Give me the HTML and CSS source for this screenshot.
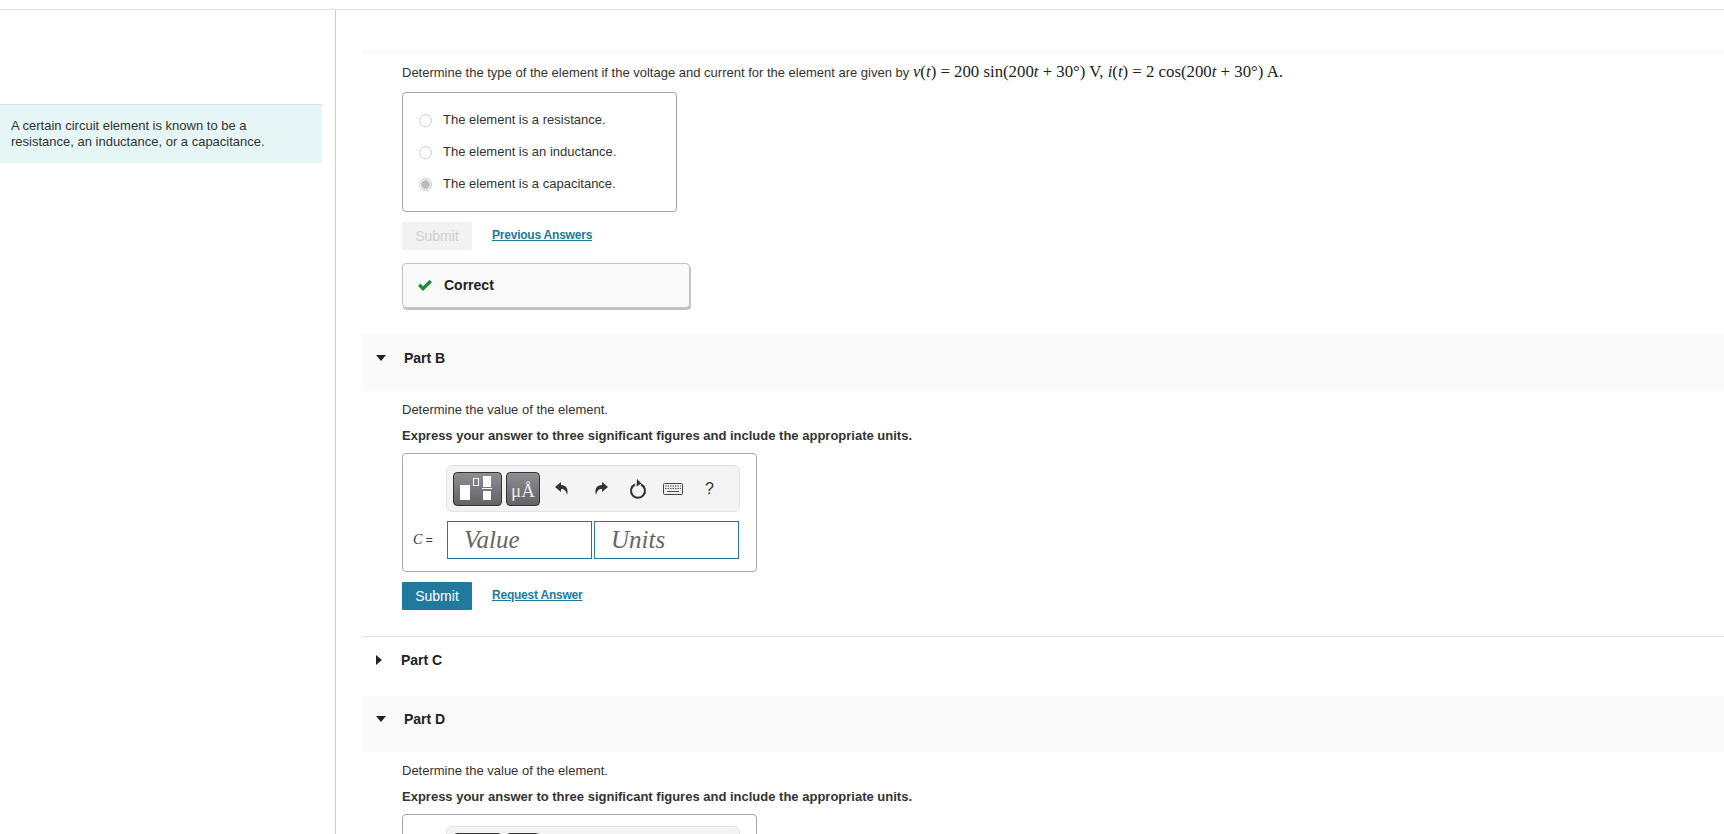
FILE: index.html
```html
<!DOCTYPE html>
<html lang="en">
<head>
<meta charset="utf-8">
<title>Circuit element</title>
<link rel="stylesheet" href="styles.css">
</head>
<body>
<div class="app">
  <aside class="side">
    <p class="info">A certain circuit element is known to be a<br>resistance, an inductance, or a capacitance.</p>
  </aside>
  <main class="main">
    <div class="strip"></div>
    <div class="content">
      <p class="question">Determine the type of the element if the voltage and current for the element are given by <span class="math"><i>v</i>(<i>t</i>) = 200 sin(200<i>t</i> + 30°) V, <i>i</i>(<i>t</i>) = 2 cos(200<i>t</i> + 30°) A.</span></p>
      <div class="choices">
        <label class="choice"><span class="radio"></span>The element is a resistance.</label>
        <label class="choice"><span class="radio"></span>The element is an inductance.</label>
        <label class="choice"><span class="radio radio-on"></span>The element is a capacitance.</label>
      </div>
      <div class="actions">
        <button class="btn btn-off">Submit</button>
        <a class="link">Previous Answers</a>
      </div>
      <div class="correct">
        <svg class="check" width="16" height="13" viewBox="0 0 16 13"><path d="M1 7l2.5-2.4L6 7.2 12.600 0.800 15 3.200 6 12z" fill="#1f8a3c"/></svg>
        <span class="correct-text">Correct</span>
      </div>
    </div>

    <section class="part part-b">
      <header class="part-bar">
        <svg class="caret" width="10" height="6" viewBox="0 0 10 6"><path d="M0 0h10L5 6z" fill="#222"/></svg>
        <h2 class="part-title">Part B</h2>
      </header>
      <div class="content">
        <p class="para">Determine the value of the element.</p>
        <p class="para para-strong">Express your answer to three significant figures and include the appropriate units.</p>
        <div class="answer">
          <div class="toolbar">
            <div class="tool tool-wide">
              <svg width="49" height="34" viewBox="0 0 49 34"><rect x="7" y="13" width="10" height="15" fill="#fff"/><rect x="20.500" y="6.500" width="5" height="7" fill="none" stroke="#fff"/><rect x="30" y="4" width="8" height="11" fill="#fff"/><rect x="29" y="16" width="10" height="1" fill="#fff"/><rect x="30" y="19" width="8" height="9" fill="#fff"/></svg>
            </div>
            <div class="tool tool-unit">μÅ</div>
            <div class="icons">
              <svg class="ico" width="16" height="16" viewBox="0 0 16 16"><path d="M7 1L1 6l6 5V8c3 0 5 1 6 6 2-6-1-10-6-10z" fill="#333"/></svg>
              <svg class="ico" width="16" height="16" viewBox="0 0 16 16"><path d="M9 1l6 5-6 5V8c-3 0-5 1-6 6-2-6 1-10 6-10z" fill="#333"/></svg>
              <svg class="ico" width="18" height="20" viewBox="0 0 18 20"><path d="M6 5.500a7 7 0 1 0 6 0" fill="none" stroke="#333" stroke-width="2"/><path d="M8 0l4.500 4.500L7.500 7.500z" fill="#333"/></svg>
              <svg class="ico" width="20" height="12" viewBox="0 0 20 12"><rect x="0.500" y="0.500" width="19" height="11" rx="1" fill="#eee" stroke="#444"/><path d="M2 3h16M2 5.500h16" stroke="#555" stroke-dasharray="1.500 1"/><path d="M4 8.500h12" stroke="#555"/></svg>
              <span class="help">?</span>
            </div>
          </div>
          <div class="inputs">
            <span class="var"><i>C</i> =</span>
            <div class="field">Value</div>
            <div class="field">Units</div>
          </div>
        </div>
        <div class="actions">
          <button class="btn">Submit</button>
          <a class="link">Request Answer</a>
        </div>
      </div>
    </section>

    <section class="part part-c">
      <svg class="caret-side" width="6" height="10" viewBox="0 0 6 10"><path d="M0 0l6 5-6 5z" fill="#222"/></svg>
      <h2 class="part-title">Part C</h2>
    </section>

    <section class="part">
      <header class="part-bar">
        <svg class="caret" width="10" height="6" viewBox="0 0 10 6"><path d="M0 0h10L5 6z" fill="#222"/></svg>
        <h2 class="part-title">Part D</h2>
      </header>
      <div class="content">
        <p class="para">Determine the value of the element.</p>
        <p class="para para-strong">Express your answer to three significant figures and include the appropriate units.</p>
        <div class="answer">
          <div class="toolbar">
            <div class="tool tool-wide"></div>
            <div class="tool tool-unit"></div>
          </div>
        </div>
      </div>
    </section>
  </main>
</div>
</body>
</html>
```
FILE: styles.css
```css
* { box-sizing: border-box; }
html, body { margin: 0; height: 100%; overflow: hidden; background: #fff; }
body { font-family: "Liberation Sans", Arial, sans-serif; font-size: 13px; line-height: 16px; color: #333; padding-top: 9px; }
p { margin: 0; }

.app { display: flex; height: calc(100vh - 9px); border-top: 1px solid #e2e4e8; overflow: hidden; }
.side { flex: 0 0 336px; padding-top: 94px; border-right: 1px solid #c3cfe2; }
.info { width: 322px; height: 59px; padding: 13px 0 0 11px; background: #e6f6f7; border-top: 1px solid #d7e2e4; color: #333; }

.main { flex: 1; min-width: 0; padding-left: 26px; }
.strip { height: 4px; margin-top: 40px; background: #f9f9f9; }
.content { padding-left: 40px; }

.question { margin-top: 10px; white-space: nowrap; }
.math { font-family: "Liberation Serif", "Times New Roman", serif; font-size: 16.800px; color: #222; }

.choices { width: 275px; height: 120px; margin-top: 11px; padding-top: 11px; border: 1px solid #a3a3a3; border-radius: 4px; }
.choice { display: flex; align-items: center; height: 32px; padding-left: 16px; }
.radio { width: 13px; height: 13px; margin-right: 11px; border: 1px solid #cfcfcf; border-radius: 50%; background: #fff; }
.radio-on { background: radial-gradient(circle, #bbb 0 4px, #f3f3f3 4.500px); }

.actions { display: flex; align-items: center; margin-top: 10px; height: 28px; }
.btn { width: 70px; height: 28px; padding: 0; border: 0; border-radius: 1px; background: #217a9e; color: #fff; font: 14px/28px "Liberation Sans", Arial, sans-serif; }
.btn-off { background: #f2f2f2; color: #d0d0d0; }
.link { margin: 0 0 2px 20px; color: #1b7a9f; font-weight: bold; font-size: 12px; letter-spacing: -0.220px; text-decoration: underline; }

.correct { display: flex; align-items: center; width: 288px; height: 45px; margin-top: 13px; padding-left: 14px; border: 1px solid #c4c4c4; border-radius: 4px; background: #f9f9f9; box-shadow: 1px 2px 0 #c2c2c2; font-weight: bold; font-size: 14px; color: #222; }
.check { margin-right: 11px; }
.correct-text { margin-bottom: 2px; }

.part-b { margin-top: 27px; }
.part-bar { display: flex; height: 56px; padding: 15px 0 0 14px; background: #f9f9f9; }
.caret { margin: 5px 18px 0 0; }
.part-title { margin: 0; font-size: 14px; line-height: 16px; font-weight: bold; color: #222; }

.para { margin-top: 10px; }
.part-bar + .content .para:first-child { margin-top: 11px; }
.para-strong { font-weight: bold; }

.answer { width: 355px; height: 119px; margin-top: 9px; padding-top: 11px; border: 1px solid #a8a8a8; border-radius: 4px; }
.toolbar { display: flex; align-items: center; width: 294px; height: 47px; margin-left: 43px; padding-left: 6px; border: 1px solid #e3e3e3; border-radius: 6px; background: #f4f4f4; }
.tool { height: 34px; border: 1px solid #333; border-radius: 4px; background: linear-gradient(#8f8f93, #636367); }
.tool-wide { width: 49px; }
.tool-wide svg { display: block; margin: -1px; }
.tool-unit { width: 34px; margin-left: 4px; color: #e8e8e8; font: 19px/36px "Liberation Serif", serif; text-align: center; }
.icons { display: flex; align-items: center; }
.ico { margin-right: 0; flex: none; }
.icons .ico:nth-child(1) { margin-left: 14px; }
.icons .ico:nth-child(2) { margin-left: 23px; }
.icons .ico:nth-child(3) { margin-left: 20px; }
.icons .ico:nth-child(4) { margin-left: 16px; }
.help { margin-left: 22px; font-size: 16px; color: #333; }

.inputs { display: flex; align-items: center; margin-top: 9px; }
.var { width: 44px; padding-left: 10px; font-size: 12px; white-space: nowrap; }
.var i { font-family: "Liberation Serif", serif; font-size: 14px; }
.field { width: 145px; height: 38px; margin-right: 2px; padding-left: 16px; border: 1px solid #217a9e; font: italic 25px/35px "Liberation Serif", serif; color: #666; }

.part-c { display: flex; height: 60px; margin-top: 26px; padding: 15px 0 0 14px; border-top: 1px solid #e2e2e2; }
.caret-side { margin: 3px 19px 0 0; }
```
